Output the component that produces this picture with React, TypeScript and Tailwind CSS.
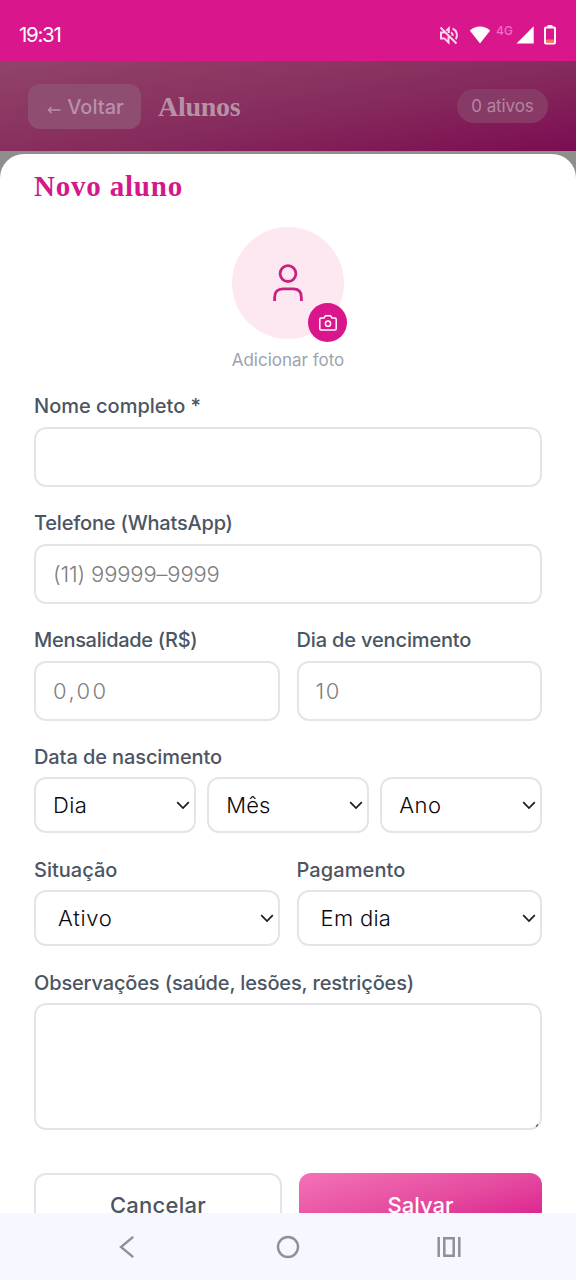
import type { ReactNode } from "react";

function Label({ children, className = "" }: { children: ReactNode; className?: string }) {
  return (
    <div className={"mb-[9.5px] h-[22px] whitespace-nowrap pt-[0.2px] text-[20px] font-medium leading-[22px] text-[#4b5563] " + className}>
      {children}
    </div>
  );
}

function Input({ placeholder = "", className = "" }: { placeholder?: string; className?: string }) {
  return (
    <input
      placeholder={placeholder}
      className={"block h-[60px] w-full rounded-[12px] border-2 border-[#e4e5e8] bg-white px-[17px] text-[22px] font-light outline-none placeholder:text-[#808080] " + className}
    />
  );
}

function Select({ value, className = "pl-[17px]" }: { value: string; className?: string }) {
  return (
    <div className={"flex h-14 w-full items-center justify-between rounded-[12px] border-2 border-[#e4e5e8] bg-white pr-1 text-[22px] font-light text-[#0a080c] " + className}>
      <span className="whitespace-nowrap pt-px">{value}</span>
      <svg className="mt-px" width="14" height="9" viewBox="0 0 14 9" fill="none" stroke="#1c1c1c" strokeWidth="1.7">
        <path d="M1.2 1.2 7 7.1l5.8-5.9" />
      </svg>
    </div>
  );
}

function StatusBar() {
  return (
    <div className="flex h-[61px] shrink-0 items-center bg-[#d9168b] pl-[19px] pr-[18px] pt-[9px] text-white">
      <span className="text-[20.5px] leading-6 tracking-[-1.3px]">19:31</span>
      <div className="ml-auto flex items-center">
        <svg width="20" height="19" viewBox="0 0 20 19" fill="none" stroke="#ffd3ee" strokeWidth="2">
          <path d="M1.5 1.5 17.5 17.5M5.6 6.4H2v6h3.3l4.2 4v-6M7.3 4.7 9.8 2.3v4.8M12 6.3c1.3.8 1.9 2 1.6 3.6M13.6 2.5c4 1.8 5.5 6.6 3.2 10.7" />
        </svg>
        <svg className="ml-2.5" width="22" height="18" viewBox="0 0 22 18" fill="#fff">
          <path d="M.8 4.5C6.7-.7 15.3-.7 21.2 4.5L11 17.6Z" />
        </svg>
        <span className="mb-2 ml-[5px] w-[20px] text-[12px] font-medium leading-3 tracking-[0.2px] text-[#f26fc2]">4G</span>
        <svg width="18" height="18" viewBox="0 0 18 18" fill="#fff">
          <path d="M17.7.3V17.5H.5Z" />
        </svg>
        <svg className="ml-[10px] mr-[2px]" width="12" height="20" viewBox="0 0 12 20">
          <path d="M3.6 0h4.8v2H3.6z" fill="#fff" />
          <rect x="1" y="2.5" width="10" height="16" rx=".7" fill="none" stroke="#fff" strokeWidth="1.9" />
          <path d="M2 14.5h8v3H2z" fill="#fa7650" />
        </svg>
      </div>
    </div>
  );
}

function Header() {
  return (
    <div className="flex h-[90px] shrink-0 items-center bg-[linear-gradient(170deg,#91446a_0%,#862b5d_55%,#7c0c52_100%)] pl-7 pr-7">
      <div className="flex h-[45px] w-[113px] items-center justify-center rounded-[12px] bg-[#904d72] pl-[2px] text-[20px] font-medium text-[#b792a8]">
        <svg className="mr-[6px] mt-[7px]" width="14" height="8" viewBox="0 0 14 8" fill="none" stroke="currentColor" strokeWidth="1.4">
          <path d="M13.5 4H1.5M4.5 1 1.5 4l3 3" />
        </svg>
        <span className="pt-px">Voltar</span>
      </div>
      <h1 className="ml-[17px] pt-[2px] font-['Liberation_Serif',serif] text-[28px] font-bold leading-8 tracking-[-0.3px] text-[#b792a6]">Alunos</h1>
      <div className="ml-auto flex h-[34px] w-[91px] items-center justify-center rounded-full bg-[#883a66] pt-[2px] text-[17px] tracking-[-0.1px] text-[#b386a3]">0 ativos</div>
    </div>
  );
}

function NavBar() {
  return (
    <div className="grid h-[67px] shrink-0 grid-cols-[1fr_24px_1fr] items-center bg-[#f5f9ff]">
      <svg className="ml-[119px]" width="16" height="22" viewBox="0 0 16 22" fill="none" stroke="#8e9196" strokeWidth="2.4">
        <path d="M14.2.9 2 11l12.2 10.1" />
      </svg>
      <svg width="24" height="24" viewBox="0 0 24 24" fill="none" stroke="#8e9196" strokeWidth="2.4">
        <circle cx="12" cy="12" r="10" />
      </svg>
      <svg className="ml-[137px]" width="24" height="20" viewBox="0 0 24 20" fill="none" stroke="#8e9196" strokeWidth="2.5">
        <path d="M1.7 0v20M22.3 0v20M7.3 1.3h9.4v17.4H7.3z" />
      </svg>
    </div>
  );
}

export default function App() {
  return (
    <div className="flex h-[1280px] w-[576px] flex-col overflow-hidden bg-[#8e8e8b] font-['Inter',sans-serif]">
      <StatusBar />
      <Header />
      <main className="mt-[2.5px] min-h-0 flex-1 overflow-hidden rounded-t-[24px] bg-white px-[34px] pt-[14.5px]">
        <h2 className="h-9 whitespace-nowrap font-['Liberation_Serif',serif] text-[29px] font-bold leading-9 tracking-[0.8px] text-[#d3188a]">Novo aluno</h2>
        <div className="mt-[23px] flex flex-col items-center">
          <div className="relative flex size-[112px] items-center justify-center rounded-full bg-[#fde8f2]">
            <svg width="30" height="38" viewBox="0 0 30 38" fill="none" stroke="#ca2084" strokeWidth="2.8">
              <circle cx="15" cy="9.6" r="7.9" />
              <path d="M1.6 37v-3.6c0-5.5 3.2-8.5 8.4-8.5h10c5.2 0 8.4 3 8.4 8.5V37" />
            </svg>
            <div className="absolute -bottom-[3px] -right-[3px] flex size-[39px] items-center justify-center rounded-full bg-[#d9168b]">
              <svg width="18" height="16" viewBox="0 0 18 16" fill="none" stroke="#fff" strokeWidth="1.5" strokeLinejoin="round">
                <path d="M2 3h3l1.4-2.2h5.2L13 3h3q1.2 0 1.2 1.2v9.6q0 1.2-1.2 1.2H2Q.8 15 .8 13.8V4.2Q.8 3 2 3Z" />
                <circle cx="9" cy="8.7" r="2.6" />
              </svg>
            </div>
          </div>
          <div className="mt-[10px] h-[22px] whitespace-nowrap text-[17px] leading-[22px] text-[#9ca3af]">Adicionar foto</div>
        </div>
        <div className="mt-[24.3px] flex flex-col gap-[25.4px]">
          <div>
            <Label className="tracking-[0px]">Nome completo *</Label>
            <Input />
          </div>
          <div>
            <Label className="tracking-[-0.2px]">Telefone (WhatsApp)</Label>
            <Input placeholder="(11) 99999–9999" className="tracking-[-0.15px]" />
          </div>
          <div className="grid grid-cols-2 gap-[17px]">
            <div>
              <Label className="tracking-[-0.3px]">Mensalidade (R$)</Label>
              <Input placeholder="0,00" className="tracking-[2.4px]" />
            </div>
            <div>
              <Label className="tracking-[-0.15px]">Dia de vencimento</Label>
              <Input placeholder="10" className="tracking-[1.5px]" />
            </div>
          </div>
          <div>
            <Label className="tracking-[-0.1px]">Data de nascimento</Label>
            <div className="grid grid-cols-3 gap-[11.5px]">
              <Select value="Dia" className="pl-[17px] tracking-[0.4px]" />
              <Select value="Mês" className="pl-[17px] tracking-[0.2px]" />
              <Select value="Ano" className="pl-[17px] tracking-[0.4px]" />
            </div>
          </div>
          <div className="grid grid-cols-2 gap-[17px]">
            <div>
              <Label>Situação</Label>
              <Select value="Ativo" className="pl-[22px] tracking-[0.7px]" />
            </div>
            <div>
              <Label className="tracking-[0.1px]">Pagamento</Label>
              <Select value="Em dia" className="pl-[22px] tracking-[0.3px]" />
            </div>
          </div>
          <div>
            <Label className="tracking-[-0.15px]">Observações (saúde, lesões, restrições)</Label>
            <div className="flex h-[127px] items-end justify-end rounded-[12px] border-2 border-[#e4e5e8] bg-white">
              <svg width="5" height="5" viewBox="0 0 5 5" stroke="#555" strokeWidth="1.2">
                <path d="M1 3.5 3 1.5" />
              </svg>
            </div>
          </div>
        </div>
        <div className="mt-[43px] flex justify-between">
          <button className="h-[60px] w-[248px] rounded-[12px] border-2 border-[#e4e5e8] bg-white pt-[4px] text-[22px] font-medium tracking-[0.25px] text-[#4b5563]">Cancelar</button>
          <button className="h-[60px] w-[243px] rounded-[12px] bg-[linear-gradient(165deg,#f472b6_0%,#e54c9f_50%,#d9168b_100%)] pt-[4px] text-[22px] font-medium text-white">Salvar</button>
        </div>
      </main>
      <NavBar />
    </div>
  );
}
